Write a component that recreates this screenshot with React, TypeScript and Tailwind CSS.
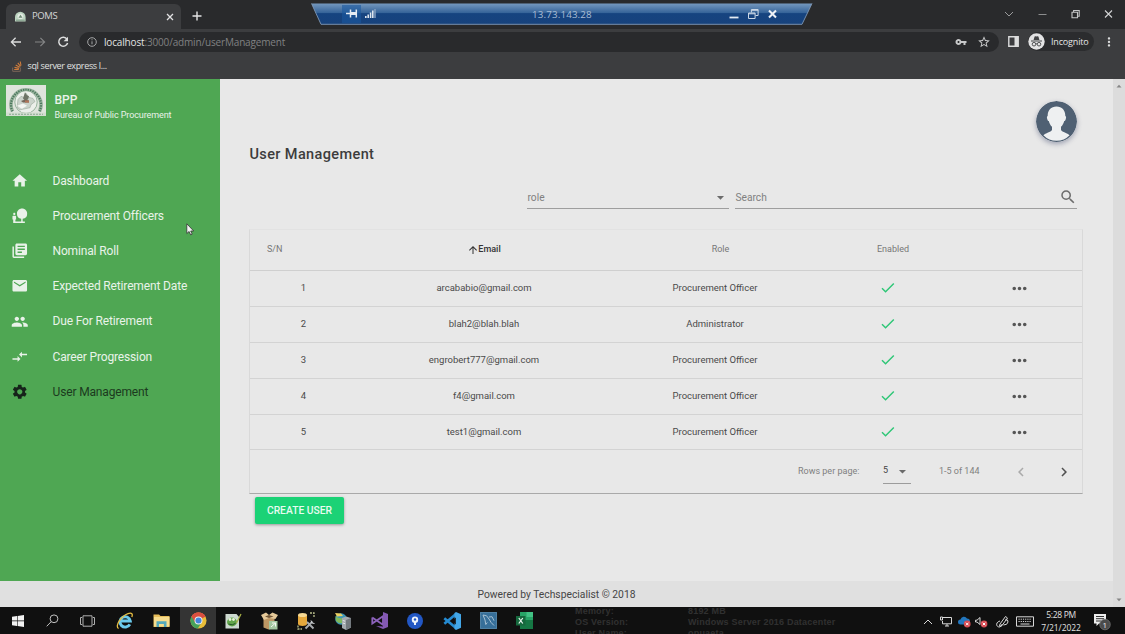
import React from "react";
import {
  MdArrowDropDown,
  MdArrowUpward,
  MdCheck,
  MdChevronLeft,
  MdChevronRight,
  MdCompareArrows,
  MdEmail,
  MdHome,
  MdLibraryBooks,
  MdMoreHoriz,
  MdMoreVert,
  MdNaturePeople,
  MdPeople,
  MdSearch,
  MdSettings,
  MdStarBorder,
  MdVpnKey,
} from "react-icons/md";

const SEGOE = "font-['Open_Sans','Noto_Sans',sans-serif]";

const menu = [
  { label: "Dashboard", icon: MdHome },
  { label: "Procurement Officers", icon: MdNaturePeople },
  { label: "Nominal Roll", icon: MdLibraryBooks },
  { label: "Expected Retirement Date", icon: MdEmail },
  { label: "Due For Retirement", icon: MdPeople },
  { label: "Career Progression", icon: MdCompareArrows },
  { label: "User Management", icon: MdSettings, active: true },
];

const users = [
  { email: "arcababio@gmail.com", role: "Procurement Officer" },
  { email: "blah2@blah.blah", role: "Administrator" },
  { email: "engrobert777@gmail.com", role: "Procurement Officer" },
  { email: "f4@gmail.com", role: "Procurement Officer" },
  { email: "test1@gmail.com", role: "Procurement Officer" },
];

function TabStrip() {
  return (
    <div className="relative flex h-[29px] shrink-0 items-end bg-[#292a2c]">
      <div className="ml-[6px] flex h-[25px] w-[175px] items-center rounded-t-[6px] bg-[#3c3d3f] pl-[9px] pr-[7px]">
        <svg width="11" height="11" viewBox="0 0 11 11">
          <path d="M0 10.5V6a5.3 5.3 0 0 1 10.6 0v4.5z" fill="#bcd3c0" />
          <circle cx="5.4" cy="5.3" r="2.9" fill="#e3ebe3" />
          <path d="M3.5 6.8l2-3 2 3z" fill="#6c8a73" />
          <path d="M1 9.2h8.8" stroke="#7e9c86" strokeWidth="1" />
        </svg>
        <span className="ml-[6px] text-[9.5px] tracking-[-0.4px] text-[#d4d5d6]">POMS</span>
        <svg className="ml-auto" width="8" height="8" viewBox="0 0 8 8">
          <path d="M1 1l6 6M7 1L1 7" stroke="#e2e2e3" strokeWidth="1.3" />
        </svg>
      </div>
      <svg className="mb-[8px] ml-[11px]" width="10" height="10" viewBox="0 0 10 10">
        <path d="M5 .5v9M.5 5h9" stroke="#e4e4e5" strokeWidth="1.4" />
      </svg>
      <div className="mb-[10px] ml-auto mr-[12px] flex items-center gap-[24px] text-[#b9babb]">
        <svg width="10" height="10" viewBox="0 0 10 10" fill="none" stroke="#9a9b9c">
          <path d="M1 3l4 4 4-4" />
        </svg>
        <svg width="9" height="10" viewBox="0 0 9 10" stroke="#8c8d8e">
          <path d="M.5 5.5h8" />
        </svg>
        <svg width="9" height="10" viewBox="0 0 9 10" fill="none" stroke="#c6c7c8" strokeWidth="1.1">
          <path d="M1 3.2h5.5v5.5H1zM2.6 3V1.5h5.6v5.7H6.6" />
        </svg>
        <svg width="9" height="10" viewBox="0 0 9 10" stroke="#d2d3d4" strokeWidth="1.1">
          <path d="M1 1.5l7 7M8 1.5l-7 7" />
        </svg>
      </div>
      <RemoteBar />
    </div>
  );
}

function RemoteBar() {
  return (
    <div className="absolute left-[311px] top-[3px] h-[22px] w-[502px]">
      <svg className="absolute inset-0" width="502" height="22" viewBox="0 0 502 22">
        <defs>
          <linearGradient id="remote" x1="0" y1="0" x2="0" y2="1">
            <stop offset="0" stopColor="#7598be" />
            <stop offset=".44" stopColor="#366499" />
            <stop offset=".48" stopColor="#164480" />
            <stop offset="1" stopColor="#17427c" />
          </linearGradient>
        </defs>
        <path d="M.5 .5H501L491 21.5H10z" fill="url(#remote)" />
        <path d="M.5 .5L10 21.3H491L501 .5" fill="none" stroke="#7f97b4" strokeWidth=".9" />
      </svg>
      <div className={"relative flex h-[21px] items-center pl-[31px] pr-[36px] " + SEGOE}>
        <div className="flex h-[18px] w-[19px] items-center justify-center bg-[#1a589f]/60">
          <svg width="12" height="9" viewBox="0 0 12 9">
            <path d="M0 4.5h4M4.5 0.5v8M10.3 .5v8" stroke="#e4ebf3" strokeWidth="1.5" />
            <path d="M4.5 3h6v3h-6z" fill="#e4ebf3" />
          </svg>
        </div>
        <svg className="ml-[4px]" width="11" height="9" viewBox="0 0 11 9">
          <path d="M0 7h1.6v2H0zM2.4 5.5H4V9H2.4zM4.8 3.5h1.6V9H4.8zM7 1.5h1.6V9H7z" fill="#dce5ee" />
          <path d="M9.3 0h1.4v9H9.3z" fill="#8ba4c2" />
        </svg>
        <span className="ml-[156px] pt-[3px] text-[9.8px] tracking-[0.14px] text-[#a9bdd5]">13.73.143.28</span>
        <div className="ml-auto flex items-center gap-[9px]">
          <svg width="10" height="12" viewBox="0 0 10 12">
            <path d="M.5 9.5h9" stroke="#e4ebf3" strokeWidth="1.8" />
          </svg>
          <svg width="11" height="12" viewBox="0 0 11 12" fill="none" stroke="#cbd8e6">
            <path d="M.5 5h6.6v5.5H.5zM.5 5.8h6.6M3.4 4.5V1.5h6.7v6H7.5M3.4 2.3h6.7" />
          </svg>
          <svg width="9" height="10" viewBox="0 0 9 10">
            <path d="M1 1.5l7 7M8 1.5l-7 7" stroke="#eef2f7" strokeWidth="2.1" />
          </svg>
        </div>
      </div>
    </div>
  );
}

function Toolbar() {
  return (
    <div className="flex h-[25px] shrink-0 items-center bg-[#3c3d3f] pl-[10px]">
      <svg width="12" height="12" viewBox="0 0 12 12" fill="none" stroke="#dcdddd" strokeWidth="1.3">
        <path d="M11 6H1.6M5.6 1.8L1.4 6l4.2 4.2" />
      </svg>
      <svg className="ml-[12px]" width="12" height="12" viewBox="0 0 12 12" fill="none" stroke="#848586" strokeWidth="1.2">
        <path d="M1 6h9.4M6.4 1.8L10.6 6l-4.2 4.2" />
      </svg>
      <svg className="ml-[11px]" width="12" height="12" viewBox="0 0 12 12" fill="none" stroke="#dcdddd" strokeWidth="1.5">
        <path d="M10 3.2A4.5 4.5 0 1 0 10.6 7" />
        <path d="M11 .8v4.4H6.6z" fill="#dcdddd" stroke="none" />
      </svg>
      <div className="ml-[10px] flex h-[20px] w-[920px] items-center rounded-full bg-[#292a2c] pl-[8px] pr-[8px]">
        <svg width="10" height="10" viewBox="0 0 10 10" fill="none" stroke="#a5a6a7">
          <circle cx="5" cy="5" r="4.3" />
          <path d="M5 4.3v3M5 2.3v1" />
        </svg>
        <span className="ml-[7px] pt-[1px] text-[10px] tracking-[-0.16px] text-[#808182]">
          <span className="text-[#e2e3e3]">localhost</span>:3000/admin/userManagement
        </span>
        <MdVpnKey className="ml-auto text-[12px] text-[#c8c9ca]" />
        <MdStarBorder className="ml-[10px] text-[14px] text-[#c8c9ca]" />
      </div>
      <svg className="ml-[9px]" width="11" height="11" viewBox="0 0 11 11">
        <path d="M.8 .8h9.4v9.4H.8z" fill="none" stroke="#dcdddd" strokeWidth="1.4" />
        <path d="M6.5 .8h3.7v9.4H6.5z" fill="#dcdddd" />
      </svg>
      <div className="ml-[9px] flex h-[19px] w-[66px] items-center rounded-full bg-[#2b2c2e]">
        <svg width="17" height="17" viewBox="0 0 17 17">
          <circle cx="8.5" cy="8.5" r="8.2" fill="#e3e3e4" />
          <path d="M5.6 7L6.5 3.8q.2-.7.9-.5l1.1.3 1.1-.3q.7-.2.9.5L11.4 7z" fill="#434446" />
          <path d="M3 8h11" stroke="#434446" strokeWidth="1" />
          <g fill="none" stroke="#434446" strokeWidth=".9">
            <circle cx="6" cy="11.2" r="1.8" />
            <circle cx="11" cy="11.2" r="1.8" />
            <path d="M7.8 11q.7-.5 1.4 0" />
          </g>
        </svg>
        <span className="ml-[6px] text-[9px] tracking-[-0.16px] text-[#e6e6e7]">Incognito</span>
      </div>
      <MdMoreVert className="ml-[8px] text-[14px] text-[#dcdddd]" />
    </div>
  );
}

function Bookmarks() {
  return (
    <div className="flex h-[25px] shrink-0 items-center bg-[#3c3d3f] pl-[12px] pb-[1px]">
      <svg width="10" height="11" viewBox="0 0 10 11" fill="none">
        <path d="M.7 6.5v3.8h7.6V6.5" stroke="#7c6658" />
        <path d="M2.2 8.5h4.6M2.5 6.4l4.5 1M3.7 4l4 2.2M5.8 1.9l2.7 3.5M8.2 .5l.8 4" stroke="#d07d3c" strokeWidth="1.1" />
      </svg>
      <span className="ml-[5.5px] text-[9px] tracking-[-0.35px] text-[#e0e1e1]">sql server express l...</span>
    </div>
  );
}

function BureauLogo() {
  return (
    <svg width="40" height="31" viewBox="0 0 40 30" preserveAspectRatio="none">
      <path d="M0 0h40v30H0z" fill="#dfe4dc" />
      <path d="M6.5 25.5A15 14.5 0 1 1 33.5 25.5" fill="none" stroke="#9cb5a0" strokeWidth="3.6" />
      <path d="M6.5 25.5A15 14.5 0 1 1 33.5 25.5" fill="none" stroke="#4a775c" strokeWidth="2.2" strokeDasharray="1.3 1.1" />
      <ellipse cx="20" cy="16.5" rx="11.2" ry="11" fill="#ecefea" stroke="#789d80" strokeWidth=".7" />
      <path d="M12 14l3-3 3 1 2-4 3 4 4 1 2 3-4 3-1 3-5 1-5 1-3-2z" fill="#cbd3cb" stroke="#8f9f91" strokeWidth=".5" />
      <path d="M17 13l2-6 2 3 2 1-1 3-3 1z" fill="#6d7466" />
      <path d="M15 15.5l4-1.5 4 1v2h-6z" fill="#74665a" />
      <path d="M19 15h4v2h-4z" fill="#b07357" />
      <path d="M11 20l6-2 4 2-5 3z" fill="#f4f6f2" />
      <path d="M0 26.5h40V30H0z" fill="#d3ddd0" />
      <path d="M3 28.3h34" stroke="#8aa990" strokeDasharray="2 1" />
    </svg>
  );
}

function Sidebar() {
  return (
    <aside className="flex w-[219.5px] shrink-0 flex-col bg-[#4fa753]">
      <div className="flex h-[84px] pl-[5.5px] pt-[6px]">
        <BureauLogo />
        <div className="ml-[9px] pt-[7px] text-[#e9f2e9]">
          <div className="text-[12px] font-medium leading-[16px]">BPP</div>
          <div className="text-[9px] leading-[15px] tracking-[-0.1px]">Bureau of Public Procurement</div>
        </div>
      </div>
      {menu.map(({ label, icon: Icon, active }) => (
        <div
          key={label}
          className={
            "flex h-[35.2px] items-center pl-[11px] text-[12px] tracking-[-0.15px] " +
            (active ? "text-[#1c3a1e]" : "text-[#e9f3e9]")
          }
        >
          <Icon className={"mr-[24px] text-[17.5px] " + (active ? "text-[#16231a]" : "text-[#e9f2e9]")} />
          <span>{label}</span>
        </div>
      ))}
    </aside>
  );
}

const GRID = "grid grid-cols-[107px_254px_208px_136px_128px] items-center";

function UserTable() {
  return (
    <div className="w-[834px] border-x border-b border-t border-x-[#d9d9d9] border-b-[#a9a9a9] border-t-[#e2e2e2] text-[9.5px] text-[#4a4a4a]">
      <div className={GRID + " h-[41px] border-b border-[#cfcfcf] text-[9px] text-[#777777]"}>
        <span className="pl-[17px]">S/N</span>
        <span className="flex items-center justify-center font-medium text-[#333333]">
          <MdArrowUpward className="text-[12px]" />
          <span className="-ml-px">Email</span>
        </span>
        <span className="pl-[11px] text-center">Role</span>
        <span className="pl-[12px] text-center">Enabled</span>
      </div>
      {users.map((user, index) => (
        <div key={user.email} className={GRID + " h-[35.9px] border-b border-[#d3d3d3] text-center"}>
          <span>{index + 1}</span>
          <span>{user.email}</span>
          <span>{user.role}</span>
          <MdCheck className="mb-px ml-px justify-self-center text-[17.5px] text-[#2fc777]" />
          <MdMoreHoriz className="justify-self-center text-[21px] text-[#555555]" />
        </div>
      ))}
      <div className="flex h-[42.5px] items-center pl-[548px] text-[9px] text-[#808080]">
        <span className="w-[85px]">Rows per page:</span>
        <div className="flex h-[24px] w-[28px] items-center border-b border-[#9c9c9c] text-[#444444]">
          <span>5</span>
          <MdArrowDropDown className="ml-[6px] text-[17px] text-[#6a6a6a]" />
        </div>
        <span className="ml-[28px] w-[73px]">1-5 of 144</span>
        <MdChevronLeft className="text-[18px] text-[#aaaaaa]" />
        <MdChevronRight className="ml-[25px] text-[18px] text-[#505050]" />
      </div>
    </div>
  );
}

function Main() {
  return (
    <main className="relative flex flex-1 flex-col items-start bg-[#e8e8e8] pl-[29.5px]">
      <div className="mt-[22px] flex h-[41px] w-full justify-end pr-[36px]">
        <svg className="rounded-full shadow-[0_2px_5px_rgba(50,60,100,0.4)]" width="41" height="41" viewBox="0 0 41 41">
          <circle cx="20.5" cy="20.5" r="20.5" fill="#4f6073" />
          <path
            d="M20.5 5.5c-5.7 0-9 4-8.8 9.6-1 .2-.9 1.4-.5 2.8.3 1.3.8 2 1.6 2.1.6 2.6 1.7 4.4 3.2 5.7v3.3c-1.2 2.2-6.5 3-8.6 5.2a18 18 0 0 0 26.2 0c-2.1-2.2-7.4-3-8.6-5.2v-3.3c1.5-1.3 2.6-3.1 3.2-5.7.8-.1 1.3-.8 1.6-2.1.4-1.4.5-2.6-.5-2.8.2-5.6-3.1-9.6-8.8-9.6z"
            fill="#eef0f1"
          />
        </svg>
      </div>
      <h1 className="mt-[3px] pl-[0.5px] text-[14.5px] font-medium leading-[20px] tracking-[0.38px] text-[#3c3c3c]">User Management</h1>
      <div className="mt-[21px] flex h-[23px] w-full pl-[278px] text-[10.2px] text-[#808080]">
        <div className="flex w-[202px] items-center justify-between border-b border-[#9e9e9e] pl-[0.5px]">
          <span className="pt-px">role</span>
          <MdArrowDropDown className="text-[17px] text-[#6c6c6c]" />
        </div>
        <div className="ml-[6px] flex w-[342px] items-center justify-between border-b border-[#9e9e9e] pl-[0.5px]">
          <span className="pt-px">Search</span>
          <MdSearch className="mb-px text-[18px] text-[#6c6c6c]" />
        </div>
      </div>
      <div className="mt-[20px]">
        <UserTable />
      </div>
      <button className="ml-[6px] mt-[3px] h-[27px] w-[89px] rounded-[2px] bg-[#1bd276] text-[10.3px] font-medium text-[#e8fbf1] shadow-[0_1px_3px_rgba(0,0,0,0.35)]">
        CREATE USER
      </button>
    </main>
  );
}

function Taskbar() {
  return (
    <div className={"relative flex h-[27px] shrink-0 items-center overflow-hidden bg-[#101010] " + SEGOE}>
      <div className="absolute left-[575px] top-[-1px] grid grid-cols-[113px_1fr] text-[9px] font-bold leading-[11px] tracking-[0.2px] text-[#303030] font-['Liberation_Sans',sans-serif]">
        <span>Memory:</span>
        <span>8192 MB</span>
        <span>OS Version:</span>
        <span>Windows Server 2016 Datacenter</span>
        <span>User Name:</span>
        <span>opuaeta</span>
      </div>
      <div className="flex h-full items-center">
        <div className="flex w-[35px] justify-center">
          <svg width="12" height="12" viewBox="0 0 12 12" fill="#f2f2f2">
            <path d="M0 1.7l5-.7v4.6H0zM5.6 .9L12 0v5.6H5.6zM0 6.3h5V11l-5-.7zM5.6 6.3H12V12l-6.4-.9z" />
          </svg>
        </div>
        <div className="flex w-[35px] justify-center">
          <svg width="13" height="13" viewBox="0 0 13 13" fill="none" stroke="#c2c2c2">
            <circle cx="8" cy="4.8" r="3.9" />
            <path d="M5.2 7.7L.7 12.3" />
          </svg>
        </div>
        <div className="flex w-[35px] justify-center">
          <svg width="15" height="12" viewBox="0 0 15 12" fill="none" stroke="#b0b0b0">
            <path d="M3 .8h9v10.4H3zM2.2 2.5H.5v7h1.7M12.8 2.5h1.7v7h-1.7" />
          </svg>
        </div>
        <div className="flex w-[39px] justify-center">
          <svg width="18" height="18" viewBox="0 0 18 18" fill="none">
            <path d="M13.8 12.3A5.2 5.2 0 1 1 14.3 9H5" stroke="#6bcbed" strokeWidth="2.9" />
            <path d="M2.6 16.5C-1.5 14.5 5 4 12 1.6c4-1.2 5 .5 3.8 3.4" stroke="#e6bd42" strokeWidth="1.3" />
          </svg>
        </div>
        <div className="flex w-[36px] justify-center pr-[2px]">
          <svg width="17" height="15" viewBox="0 0 17 15">
            <path d="M.5 1.5h5.5l1.5 1.5h9v11H.5z" fill="#e7bd59" />
            <path d="M1 4h15.5v9.5H1z" fill="#f6dc8e" />
            <path d="M3.5 14V8.2h10V14h-2.6v-3H6v3z" fill="#54a9bb" />
          </svg>
        </div>
        <div className="flex h-full w-[36px] items-center justify-center bg-[#343434]">
          <svg width="17" height="17" viewBox="0 0 18 18">
            <circle cx="9" cy="9" r="8.5" fill="#e9bd39" />
            <path d="M9 9L1.6 4.8A8.5 8.5 0 0 1 16.4 4.8z" fill="#d94f40" />
            <path d="M9 9L1.6 4.8A8.5 8.5 0 0 0 8.2 17.5L12.4 11z" fill="#46a35a" />
            <path d="M9 4.8h7.4A8.5 8.5 0 0 0 1.6 4.8L5.4 11z" fill="#d94f40" />
            <circle cx="9" cy="9" r="4.2" fill="#eeeeee" />
            <circle cx="9" cy="9" r="3.2" fill="#4385db" />
          </svg>
        </div>
        <div className="flex w-[35px] justify-center">
          <svg width="17" height="16" viewBox="0 0 17 16">
            <path d="M.5 1h11l2.5 3v11.5H.5z" fill="#cdd9d0" />
            <ellipse cx="7" cy="9" rx="5" ry="4.4" fill="#61a64a" />
            <circle cx="5" cy="6.5" r="1.4" fill="#eaf3dc" />
            <circle cx="8.5" cy="6.5" r="1.4" fill="#eaf3dc" />
            <path d="M3.5 11q4 2 7-.7" stroke="#25552a" fill="none" />
            <path d="M16 1l-4.5 9" stroke="#a9b246" strokeWidth="1.2" />
          </svg>
        </div>
        <div className="flex w-[37px] justify-center">
          <svg width="17" height="18" viewBox="0 0 17 18">
            <path d="M2.5 6h11v10l-6 1.5-5-2z" fill="#bd9764" />
            <path d="M0 3l5-2.5L8 3l3.5-2.5L17 3l-2.6 4L8 6 3 8z" fill="#e5c999" />
            <path d="M4 4.5L8 3l4.5 1.5L8 6z" fill="#705536" />
            <path d="M8 9h8.5v8.5H8z" fill="#a3c7a0" />
            <path d="M10 15l4.5-4M14.5 11v3.5M14.5 11H11" stroke="#f3f8f1" fill="none" />
          </svg>
        </div>
        <div className="flex w-[36px] justify-center">
          <svg width="18" height="18" viewBox="0 0 18 18">
            <path d="M1 3v9c0 2.5 9 2.5 9 0V3z" fill="#e5a83c" />
            <ellipse cx="5.5" cy="3" rx="4.5" ry="2" fill="#f6d994" />
            <path d="M13 1h4v4M1 13.5V17h4" stroke="#b8bd8b" fill="none" strokeWidth="1.3" strokeDasharray="2 1" />
            <path d="M8.5 16.5l7-7M10 10l6.5 6.5" stroke="#a9adb0" strokeWidth="1.9" />
            <path d="M14 8.5l1 2.5 2.5.5" stroke="#d1d4d6" fill="none" />
          </svg>
        </div>
        <div className="flex w-[37px] justify-center">
          <svg width="18" height="18" viewBox="0 0 18 18">
            <circle cx="7" cy="7" r="5.8" fill="#3d97b7" />
            <path d="M1.5 4q4 4 10.5 1l-1 5Q6 13 2 9z" fill="#7fb95c" />
            <path d="M1 1l6 .5L9 4 3 4.5z" fill="#ebd062" />
            <path d="M8 6l4-1.5L17 6v9.5L12 18l-4-2z" fill="#a4aaae" />
            <path d="M12 8l5-2v9.5L12 18z" fill="#73797e" />
            <path d="M8.8 8.5l2.3.7M8.8 11l2.3.7" stroke="#e4e7e9" />
          </svg>
        </div>
        <div className="flex w-[36px] justify-center">
          <svg width="17" height="17" viewBox="0 0 17 17">
            <path d="M1.3 5.5v6L12 4.3v8.5L1.3 5.5" fill="none" stroke="#8c62bb" strokeWidth="1.8" />
            <path d="M12 0l5 2v13l-5 2-7-3 7 .5z" fill="#8459b4" />
          </svg>
        </div>
        <div className="flex w-[36px] justify-center">
          <svg width="16" height="16" viewBox="0 0 16 16">
            <circle cx="8" cy="8" r="8" fill="#2257c4" />
            <circle cx="8" cy="6.7" r="3.2" fill="#edf3fc" />
            <path d="M7 8h2v4H7z" fill="#edf3fc" />
            <circle cx="8" cy="6.5" r="1.2" fill="#2257c4" />
          </svg>
        </div>
        <div className="flex w-[37px] justify-center">
          <svg width="18" height="18" viewBox="0 0 18 18">
            <path d="M13 2L1.3 11.8M13 16L1.3 6.2" stroke="#258bd2" strokeWidth="2.6" />
            <path d="M13 0l5 2.2v13.6L13 18l-1.5-1V1z" fill="#43a7e8" />
            <path d="M12.8 5.5v7L8.4 9z" fill="#101010" />
          </svg>
        </div>
        <div className="flex w-[36px] justify-center">
          <svg width="17" height="17" viewBox="0 0 17 17">
            <path d="M0 0h17v17H0z" fill="#376f99" />
            <path d="M.5 .5h16v16H.5z" fill="none" stroke="#4f80a3" />
            <path d="M3 3q4-.5 6 4 1.5 3.5 5 6.5M3 3l2 5 .8 4.5 1.5-2M9 5l3-.3 2 4" fill="none" stroke="#a5bfd2" />
          </svg>
        </div>
        <div className="flex w-[36px] justify-center">
          <svg width="17" height="17" viewBox="0 0 17 17">
            <path d="M4 0h13v17H4z" fill="#27a466" />
            <path d="M4 8h13v9H4z" fill="#167744" />
            <path d="M10.5 0H17v5h-6.5z" fill="#42c184" />
            <path d="M0 4h9.5v9.5H0z" fill="#16683d" />
            <path d="M2.8 6l4 5.5M6.8 6l-4 5.5" stroke="#f0f8f3" strokeWidth="1.2" />
          </svg>
        </div>
      </div>
      <div className="ml-auto flex h-full items-center pr-[14px] pt-[2px]">
        <svg width="10" height="10" viewBox="0 0 10 10" fill="none" stroke="#d8d8d8">
          <path d="M1 7l4-4 4 4" />
        </svg>
        <svg className="ml-[7px]" width="12" height="11" viewBox="0 0 12 11" fill="none" stroke="#d8d8d8">
          <path d="M3 1.5h8.5v6.3H2.5V5M5 10h4M7 8v2M.5 1h2v3h-2z" />
        </svg>
        <svg className="ml-[6px]" width="13" height="12" viewBox="0 0 13 12">
          <path d="M2.5 8.5a2.5 2.5 0 0 1 0-5A3.5 3.5 0 0 1 9 2.5a3 3 0 0 1 0 6z" fill="#2276bd" />
          <circle cx="9.2" cy="8" r="3.4" fill="#d84c54" />
          <path d="M7.9 6.7l2.6 2.6M10.5 6.7L7.9 9.3" stroke="#fff" />
        </svg>
        <svg className="ml-[4px]" width="13" height="12" viewBox="0 0 13 12">
          <path d="M.5 4.2H2L5 1.5v7L2 6H.5z" fill="none" stroke="#d8d8d8" />
          <circle cx="9" cy="8" r="3.4" fill="#d84c54" />
          <path d="M7.7 6.7l2.6 2.6M10.3 6.7L7.7 9.3" stroke="#fff" />
        </svg>
        <svg className="ml-[8px]" width="13" height="13" viewBox="0 0 13 13" fill="none" stroke="#d8d8d8">
          <path d="M4 9L9.5 1.5l2 1.5L6 10.5l-2.5.7zM4 6C-.5 7-.3 12 3.5 12q3-.5 2.5-3M7.5 10q4 0 4.5-3t-3-2" />
        </svg>
        <svg className="ml-[7px]" width="18" height="11" viewBox="0 0 18 11" fill="none" stroke="#d8d8d8">
          <path d="M.5 .8h17v9.4H.5z" />
          <path d="M2.5 3.2h13M2.5 5.5h13" strokeDasharray="1.2 1" />
          <path d="M4.5 8h9" />
        </svg>
        <div className="-mt-[2px] ml-[4px] flex w-[46px] flex-col items-center text-[8.5px] leading-[13px] tracking-[-0.1px] text-[#e0e0e0]">
          <span className="tracking-[-0.3px]">5:28 PM</span>
          <span className="whitespace-nowrap">7/21/2022</span>
        </div>
        <div className="relative ml-[9px] h-[19px] w-[18px]">
          <svg width="18" height="19" viewBox="0 0 18 19">
            <path d="M1 2h12v9.5H6L3.5 14v-2.5H1z" fill="#ededed" />
            <path d="M3 4.5h8M3 6.7h8M3 9h5" stroke="#333" />
            <circle cx="12" cy="12.5" r="5.3" fill="#4b4b4b" stroke="#777" strokeWidth=".7" />
          </svg>
          <span className="absolute left-[9.5px] top-[7px] text-[8px] leading-[11px] text-[#eeeeee]">1</span>
        </div>
      </div>
    </div>
  );
}

export default function App() {
  return (
    <div className="relative flex h-[634px] w-[1125px] flex-col overflow-hidden bg-[#101010] font-['Roboto',sans-serif]">
      <div className={"flex shrink-0 flex-col " + SEGOE}>
        <TabStrip />
        <Toolbar />
        <Bookmarks />
      </div>
      <div className="flex h-[528px] shrink-0">
        <div className="flex flex-1 flex-col">
          <div className="flex h-[502px]">
            <Sidebar />
            <Main />
          </div>
          <footer className="flex h-[26px] items-center justify-center bg-[#e0e0e0] pt-[1px] text-[10.3px] text-[#454545]">
            Powered by Techspecialist © 2018
          </footer>
        </div>
        <div className="flex w-[12px] flex-col items-center justify-between bg-[#dcdcdc] py-[5px]">
          <svg width="6" height="4" viewBox="0 0 6 4">
            <path d="M.5 3.5L3 .8l2.5 2.7z" fill="#868686" />
          </svg>
          <svg width="6" height="4" viewBox="0 0 6 4">
            <path d="M.5 .5L3 3.2 5.5 .5z" fill="#868686" />
          </svg>
        </div>
      </div>
      <Taskbar />
      <svg className="absolute left-[186px] top-[223px]" width="9" height="13" viewBox="0 0 9 13">
        <path d="M.8 .8v9.7l2.3-2 1.6 3.4 1.5-.7-1.5-3.2h3z" fill="#f4f4f4" stroke="#333" strokeWidth=".8" />
      </svg>
    </div>
  );
}
